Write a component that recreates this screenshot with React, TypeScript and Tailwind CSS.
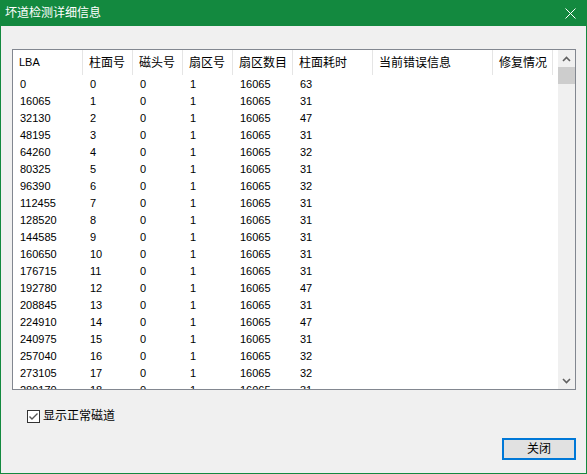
import React from 'react';

const cols = [
  { label: 'LBA', w: 'w-[70px]', latin: true },
  { label: '柱面号', w: 'w-[50px]' },
  { label: '磁头号', w: 'w-[50px]' },
  { label: '扇区号', w: 'w-[50px]' },
  { label: '扇区数目', w: 'w-[60px]' },
  { label: '柱面耗时', w: 'w-[80px]' },
  { label: '当前错误信息', w: 'w-[120px]' },
  { label: '修复情况', w: 'w-[60px]' },
];

const times = [63, 31, 47, 31, 32, 31, 32, 31, 31, 31, 31, 31, 47, 31, 47, 31, 32, 32, 31];

const rows = times.map((t, i) => [String(i * 16065), String(i), '0', '1', '16065', String(t), '', '']);

const font = { fontFamily: '"Liberation Sans", "Noto Sans CJK SC", sans-serif' };

export default function App() {
  return (
    <div
      className="w-[587px] h-[474px] flex flex-col bg-[#f0f0f0] border-l border-r border-b border-[#13893f] text-black"
      style={font}
    >
      {/* title bar */}
      <div className="h-[26px] shrink-0 bg-[#13893f] flex items-center justify-between pl-[4px] pr-[10px]">
        <span className="text-white text-[12px] leading-none">坏道检测详细信息</span>
        <svg width="11" height="11" viewBox="0 0 11 11">
          <path d="M0.5 0.5 L10.5 10.5 M10.5 0.5 L0.5 10.5" stroke="#fff" strokeWidth="1" />
        </svg>
      </div>

      {/* list */}
      <div className="ml-[11px] mt-[23px] w-[564px] h-[341px] border border-[#828790] bg-white flex">
        <div className="flex-1 flex flex-col overflow-hidden">
          <div className="flex h-[26px] shrink-0">
            {cols.map((c) => (
              <div
                key={c.label}
                className={`${c.w} shrink-0 h-[25px] border-r border-[#e5e5e5] flex items-center pl-[6px] ${c.latin ? 'text-[11px]' : 'text-[12px]'}`}
              >
                {c.label}
              </div>
            ))}
          </div>
          {rows.map((r, i) => (
            <div key={i} className="flex h-[17px] shrink-0 text-[11px] leading-[17px]">
              {r.map((v, j) => (
                <div key={j} className={`${cols[j].w} shrink-0 pl-[7px]`}>
                  {v}
                </div>
              ))}
            </div>
          ))}
        </div>
        {/* scrollbar */}
        <div className="w-[17px] shrink-0 bg-[#f0f0f0] flex flex-col">
          <div className="h-[17px] flex items-center justify-center">
            <svg width="9" height="6" viewBox="0 0 9 6">
              <path d="M1 5 L4.5 1.5 L8 5" stroke="#606060" strokeWidth="1.6" fill="none" />
            </svg>
          </div>
          <div className="h-[17px] bg-[#cdcdcd]" />
          <div className="flex-1" />
          <div className="h-[17px] flex items-center justify-center">
            <svg width="9" height="6" viewBox="0 0 9 6">
              <path d="M1 1 L4.5 4.5 L8 1" stroke="#606060" strokeWidth="1.6" fill="none" />
            </svg>
          </div>
        </div>
      </div>

      {/* checkbox */}
      <div className="ml-[26px] mt-[19px] flex items-center gap-[3px] h-[14px]">
        <div className="w-[13px] h-[13px] border border-[#333] bg-white flex items-center justify-center">
          <svg width="11" height="11" viewBox="0 0 11 11">
            <path d="M1.5 5.5 L4 8 L9.5 2.5" stroke="#555" strokeWidth="1.4" fill="none" />
          </svg>
        </div>
        <span className="text-[12px] leading-none">显示正常磁道</span>
      </div>

      {/* button */}
      <div className="flex justify-end mt-[15px] mr-[10px]">
        <button className="w-[74px] h-[22px] border-2 border-[#0078d7] bg-[#e1e1e1] text-[12px] leading-none flex items-center justify-center">
          关闭
        </button>
      </div>
    </div>
  );
}
